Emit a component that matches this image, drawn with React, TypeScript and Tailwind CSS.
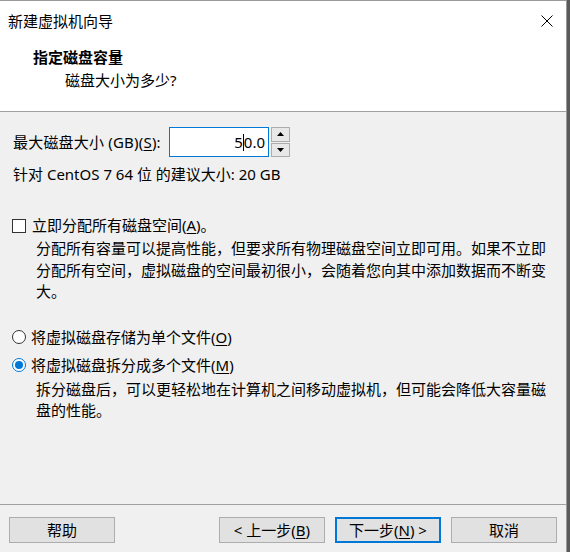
function Mn({ c }: { c: string }) {
  return <span className="underline underline-offset-2">{c}</span>;
}

function Btn({ children, primary }: { children: React.ReactNode; primary?: boolean }) {
  return (
    <div
      className={
        "w-[106px] h-[26px] flex items-center justify-center bg-[#e1e1e1] " +
        (primary ? "border-2 border-[#0078d7]" : "border border-[#adadad]")
      }
    >
      {children}
    </div>
  );
}

export default function App() {
  return (
    <div className="w-[570px] h-[552px] bg-[#5a5a5a] flex font-['Noto_Sans','Noto_Sans_CJK_SC',sans-serif] text-[15px] leading-[21px] text-black">
      <div className="w-[567px] h-[552px] bg-[#f0f0f0] border-r border-t border-[#9a9a9a] flex flex-col">
        {/* header */}
        <div className="bg-white h-[111px] border-b border-[#a0a0a0] flex flex-col">
          <div className="h-[40px] flex items-center justify-between pl-[8px] pr-[13px]">
            <span>新建虚拟机向导</span>
            <svg width="12" height="12" viewBox="0 0 12 12">
              <path d="M0.5 0.5 L11.5 11.5 M11.5 0.5 L0.5 11.5" stroke="#000" strokeWidth="1" />
            </svg>
          </div>
          <div className="pl-[33px] pt-[6px] font-bold">指定磁盘容量</div>
          <div className="pl-[65px] pt-[2px]">磁盘大小为多少?</div>
        </div>

        {/* body */}
        <div className="flex-1 flex flex-col px-[13px]">
          <div className="mt-[15px] flex items-center h-[30px]">
            <span className="w-[156px] tracking-[0.2px]">
              最大磁盘大小 (GB)(<Mn c="S" />):
            </span>
            <div className="w-[100px] h-[30px] bg-white border border-[#0078d7] flex items-center justify-end pr-[3px]">
              5<span className="inline-block w-px h-[17px] bg-black" />0.0
            </div>
            <div className="ml-[2px] w-[19px] h-[30px] flex flex-col gap-px">
              <div className="flex-1 bg-[#e8e8e8] border border-[#adadad] flex items-center justify-center">
                <svg width="7" height="4" viewBox="0 0 7 4"><path d="M3.5 0 L7 4 L0 4 Z" fill="#000" /></svg>
              </div>
              <div className="flex-1 bg-[#e8e8e8] border border-[#adadad] flex items-center justify-center">
                <svg width="7" height="4" viewBox="0 0 7 4"><path d="M0 0 L7 0 L3.5 4 Z" fill="#000" /></svg>
              </div>
            </div>
          </div>
          <div className="mt-[7px]">针对 CentOS 7 64 位 的建议大小: 20 GB</div>

          <div className="mt-[30px] flex items-center -ml-[1px]">
            <div className="w-[14px] h-[14px] bg-white border border-[#333]" />
            <span className="ml-[6px]">
              立即分配所有磁盘空间(<Mn c="A" />)。
            </span>
          </div>
          <div className="mt-[2px] ml-[23px] w-[516px] leading-[21.5px]">
            分配所有容量可以提高性能，但要求所有物理磁盘空间立即可用。如果不立即分配所有空间，虚拟磁盘的空间最初很小，会随着您向其中添加数据而不断变大。
          </div>

          <div className="mt-[24px] flex items-center -ml-[1px]">
            <div className="w-[14px] h-[14px] rounded-full bg-white border border-[#333]" />
            <span className="ml-[5px]">
              将虚拟磁盘存储为单个文件(<Mn c="O" />)
            </span>
          </div>
          <div className="mt-[7px] flex items-center -ml-[1px]">
            <div className="w-[14px] h-[14px] rounded-full bg-white border border-[#0078d7] flex items-center justify-center">
              <div className="w-[8px] h-[8px] rounded-full bg-[#0078d7]" />
            </div>
            <span className="ml-[5px]">
              将虚拟磁盘拆分成多个文件(<Mn c="M" />)
            </span>
          </div>
          <div className="mt-[3px] ml-[23px] w-[516px] leading-[21.5px]">
            拆分磁盘后，可以更轻松地在计算机之间移动虚拟机，但可能会降低大容量磁盘的性能。
          </div>
        </div>

        {/* footer */}
        <div className="h-[48px] border-t border-[#a0a0a0] flex items-start pt-[12px] px-[9px]">
          <Btn>帮助</Btn>
          <div className="flex-1" />
          <div className="flex gap-[10px]">
            <Btn>
              &lt; 上一步(<Mn c="B" />)
            </Btn>
            <Btn primary>
              下一步(<Mn c="N" />) &gt;
            </Btn>
            <Btn>取消</Btn>
          </div>
        </div>
      </div>
    </div>
  );
}
